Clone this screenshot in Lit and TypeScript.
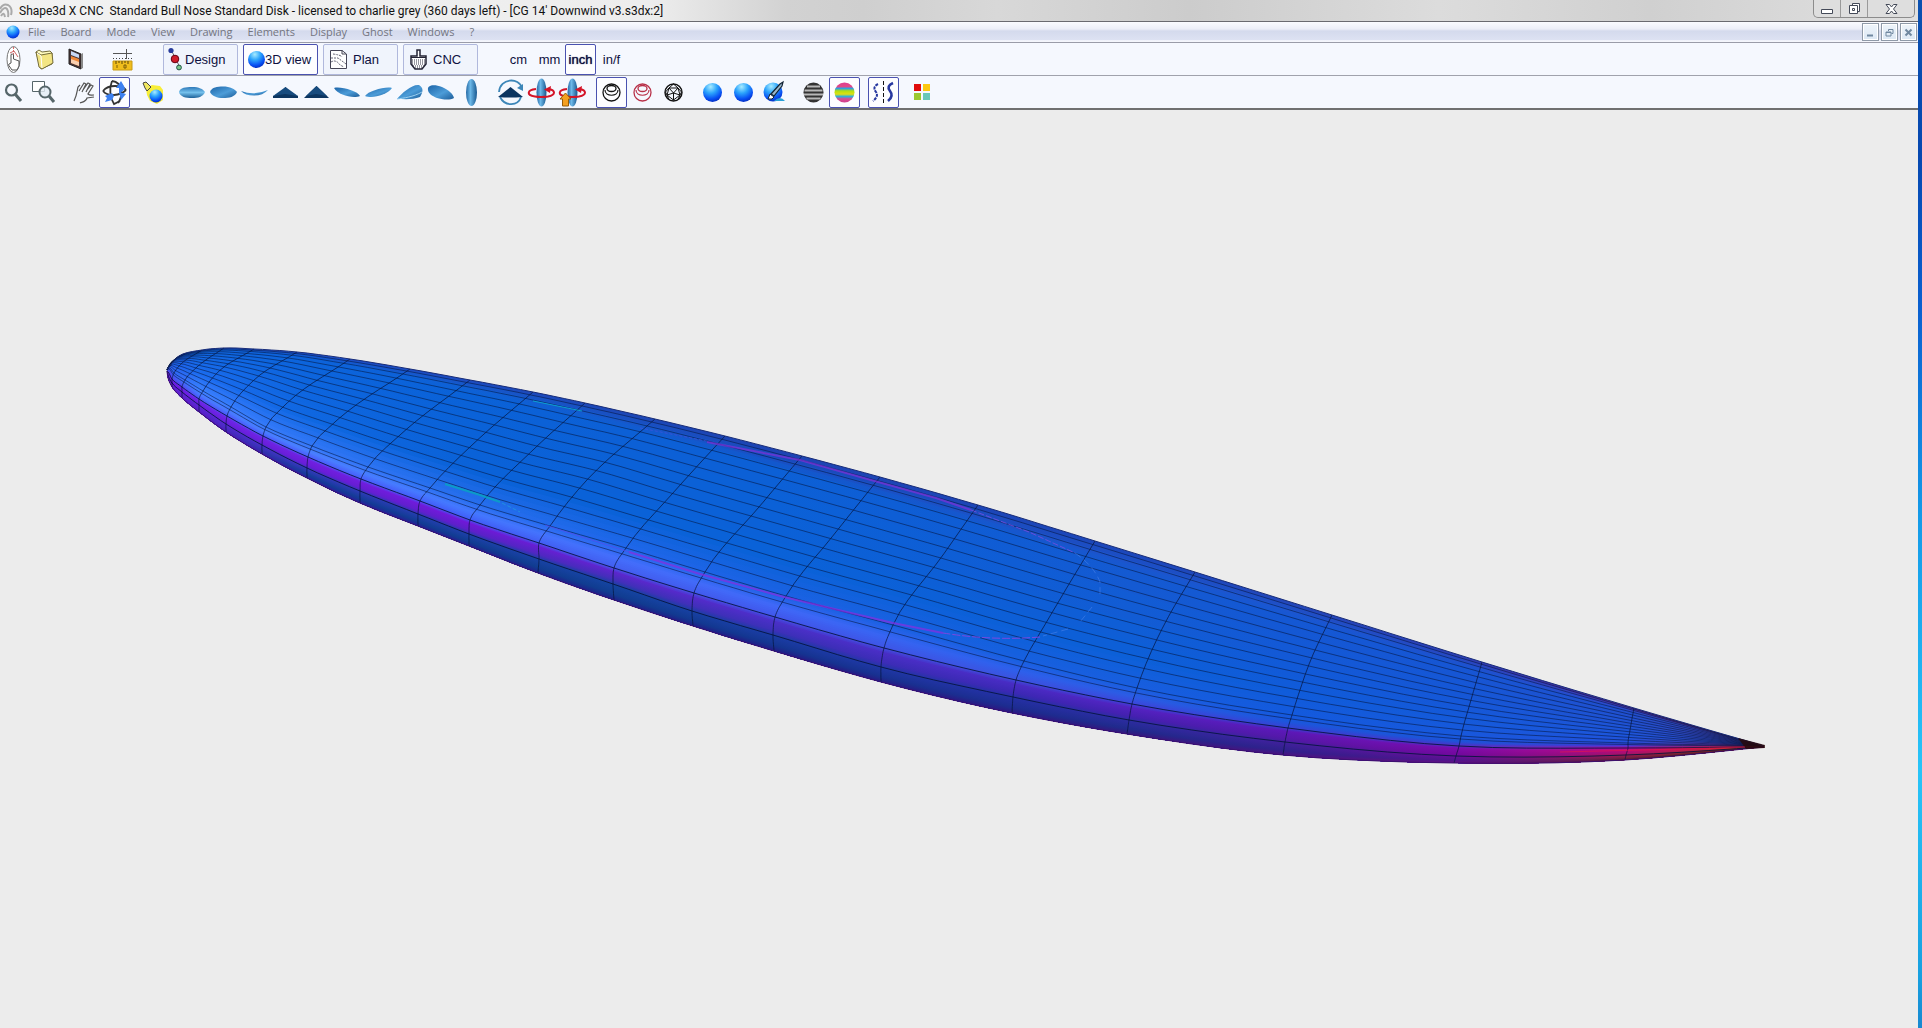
import { LitElement, html, svg, css, type SVGTemplateResult } from "lit";
import { customElement, state } from "lit/decorators.js";
import { classMap } from "lit/directives/class-map.js";

type Pt = [number, number];
type Station = [Pt, Pt, Pt, Pt, Pt, Pt];

/* Slices of the hull, nose to tail: far rail, deck, deck edge, rail, chine, near rail. */
const STATIONS: Station[] = [
  [[167, 369], [167, 369], [167, 370], [167, 371], [167, 371], [167, 371]],
  [[179, 356], [171, 363], [169, 368], [168, 372], [168, 375], [168, 378]],
  [[202, 350], [180, 365], [174, 373], [172, 379], [172, 383], [172, 387]],
  [[224, 348], [197, 367], [185, 380], [182, 387], [182, 392], [182, 398]],
  [[254, 349], [218, 372], [203, 391], [199, 399], [199, 405], [199, 412]],
  [[297, 352], [254, 380], [231, 407], [227, 416], [226, 424], [226, 432]],
  [[350, 359], [285, 405], [266, 427], [263, 436], [262, 445], [262, 454]],
  [[410, 369], [334, 423], [312, 446], [308, 457], [307, 468], [307, 478]],
  [[470, 380], [400, 435], [368, 467], [361, 479], [360, 491], [360, 503]],
  [[533, 392], [472, 445], [430, 488], [420, 501], [418, 514], [418, 526]],
  [[585, 403], [533, 450], [480, 505], [470, 520], [469, 534], [469, 546]],
  [[655, 419], [585, 482], [550, 526], [539, 543], [539, 559], [538, 573]],
  [[725, 436], [673, 493], [626, 548], [614, 568], [613, 584], [614, 600]],
  [[802, 456], [759, 507], [705, 572], [694, 593], [692, 611], [693, 626]],
  [[880, 477], [832, 537], [786, 596], [775, 617], [773, 635], [774, 651]],
  [[978, 505], [943, 555], [893, 625], [884, 648], [881, 667], [881, 682]],
  [[1095, 541], [1043, 628], [1024, 661], [1016, 680], [1013, 697], [1012, 713]],
  [[1195, 572], [1165, 623], [1137, 688], [1132, 704], [1129, 720], [1127, 734]],
  [[1332, 615], [1312, 657], [1292, 715], [1288, 728], [1285, 742], [1283, 755]],
  [[1482, 662], [1471, 700], [1461, 736], [1459, 746], [1456, 756], [1454, 763]],
  [[1634, 708], [1630, 730], [1628, 743], [1628, 748], [1626, 755], [1625, 760]],
  [[1764, 746], [1764, 746], [1764, 746], [1764, 747], [1764, 747], [1764, 747]],
];

const spline = (pts: Pt[], at: number): Pt => {
  const n = pts.length - 1;
  const i = Math.min(Math.floor(at), n - 1);
  const t = at - i;
  const a = pts[Math.max(i - 1, 0)];
  const b = pts[i];
  const c = pts[i + 1];
  const d = pts[Math.min(i + 2, n)];
  const axis = (k: 0 | 1) => {
    const sb = dist(a, b) || 1e-6;
    const sc = dist(b, c) || 1e-6;
    const sd = dist(c, d) || 1e-6;
    const m1 = i === 0 ? c[k] - b[k] : sc * ((b[k] - a[k]) / sb * (sc / (sb + sc)) + (c[k] - b[k]) / sc * (sb / (sb + sc)));
    const m2 = i === n - 1 ? c[k] - b[k] : sc * ((c[k] - b[k]) / sc * (sd / (sc + sd)) + (d[k] - c[k]) / sd * (sc / (sc + sd)));
    const t2 = t * t;
    const t3 = t2 * t;
    return (2 * t3 - 3 * t2 + 1) * b[k] + (t3 - 2 * t2 + t) * m1 + (3 * t2 - 2 * t3) * c[k] + (t3 - t2) * m2;
  };
  return [axis(0), axis(1)];
};
const dist = (p: Pt, q: Pt) => Math.hypot(p[0] - q[0], p[1] - q[1]);

/* Position on a slice: 0..1 runs over the deck by arc length, 1..4 over the rail. */
const onSlice = (s: Station, v: number): Pt => {
  if (v >= 1) return spline(s, v + 1);
  const steps = 24;
  const pts: Pt[] = [];
  for (let i = 0; i <= steps; i++) pts.push(spline(s, (2 * i) / steps));
  const len = [0];
  for (let i = 1; i <= steps; i++) len.push(len[i - 1] + dist(pts[i], pts[i - 1]));
  const goal = v * len[steps];
  if (len[steps] < 1e-6) return s[0];
  let i = 1;
  while (i < steps && len[i] < goal) i++;
  const f = (goal - len[i - 1]) / (len[i] - len[i - 1] || 1);
  return [pts[i - 1][0] + (pts[i][0] - pts[i - 1][0]) * f, pts[i - 1][1] + (pts[i][1] - pts[i - 1][1]) * f];
};

const lengthwise = (v: number): Pt[] => {
  const ctrl = STATIONS.map((s) => onSlice(s, v));
  const out: Pt[] = [];
  for (let i = 0; i <= (ctrl.length - 1) * 5; i++) out.push(spline(ctrl, i / 5));
  return out;
};
const across = (s: Station): Pt[] => Array.from({ length: 41 }, (_, i) => onSlice(s, i / 10));
const join = (pts: Pt[]) => pts.map((p) => `${p[0].toFixed(1)} ${p[1].toFixed(1)}`).join("L");

/* Curvature colours: one row for each place on the slice, one column for each x. */
const SHADE_X = [167, 199, 308, 470, 614, 775, 1014, 1130, 1286, 1457, 1627, 1764];
const SHADE: [number, string][] = [
  [0, "2a3cc0 1b50cc 1b4fc8 1c4cc0 1c48b8 1c44b4 1c46b8 1c48bc 2248bc 2c40b8 50289c 700830"],
  [0.06, "1c58dc 0f62dc 0c62da 1060d4 1658cc 1850c4 1c52c8 1c54cc 1c56d0 2050cc 3444c8 602070"],
  [0.12, "1c5ce0 1066e0 0c64dc 0a62d8 0c60d6 0c60d6 105cd4 145ad2 1458d4 1656d4 2050d0 4838a0"],
  [0.75, "2060ec 1c6cf0 0f68e2 0a62d8 0a62d8 0a62d8 0c60d8 0c60d8 0f5cda 145ada 1c56dc 3840b8"],
  [1, "3060f4 3c80ff 3478f8 2a70f0 2268ec 1c62e4 1860e0 1a5ee0 145ade 1858dc 2450dc 802080"],
  [1.5, "4050f0 4878ff 4a80ff 4478ff 446efc 4068f8 2e60ec 2c5ce4 1c56dc 1c54d8 4038d4 b01830"],
  [1.9, "5a38e8 4a58fa 4a60fc 4060f8 4260f0 4058ec 3a54e0 3a48dc 3444d4 4834c8 b00ca0 e01010"],
  [2.2, "6c1ce4 6c28e8 7020e0 7018d8 5c26cc 4a30c8 482cc4 5222c0 5c18b8 7a0cac c0087c e01818"],
  [2.7, "6e18e0 6a20e0 6a1cd8 5c20c8 4030b8 3c30b8 3c28b4 4420b0 5418a8 7408a0 a81070 c03818"],
  [3, "6420d8 6024d8 3438bc 1c40a8 1444a0 1a3ca4 2430a4 2c2ca0 40209c 680c98 a01850 903018"],
  [3.6, "6020d0 5824cc 143c98 103c90 103c90 143490 1c2c90 202a8c 30208c 50148c 702040 602010"],
  [4, "6414c0 5c14c0 3018a0 241c90 201c88 241884 301480 38147c 501080 680c80 501030 301008"],
];
const rgb = (h: string) => [0, 2, 4].map((i) => parseInt(h.slice(i, i + 2), 16));
const shadeAt = (v: number): string[] => {
  let i = 0;
  while (i < SHADE.length - 2 && SHADE[i + 1][0] < v) i++;
  const f = Math.min(1, Math.max(0, (v - SHADE[i][0]) / (SHADE[i + 1][0] - SHADE[i][0])));
  const lo = SHADE[i][1].split(" ");
  const hi = SHADE[i + 1][1].split(" ");
  return lo.map((c, k) => {
    const a = rgb(c);
    const b = rgb(hi[k]);
    return `rgb(${a.map((x, n) => Math.round(x + (b[n] - x) * f)).join(",")})`;
  });
};

const STRIPS = [
  0, 0.03, 0.06, 0.09, 0.12, 0.3, 0.5, 0.65, 0.75, 0.8, 0.84, 0.88, 0.91, 0.94, 0.97,
  ...Array.from({ length: 38 }, (_, i) => 1 + i * 0.08),
];
const GRID_LINES = [0.03, 0.07, 0.13, 0.2, 0.28, 0.36, 0.44, 0.52, 0.6, 0.68, 0.76, 0.84, 0.92, 1, 1.3];

const board = () => {
  const near = lengthwise(4);
  const back = join([...near].reverse());
  const far = lengthwise(0);
  const strips = STRIPS.map((v, i) => ({ id: `strip${i}`, colours: shadeAt(v), d: `M${join(lengthwise(v))}L${back}Z` }));
  const span = SHADE_X[SHADE_X.length - 1] - SHADE_X[0];
  return svg`
    <defs>
      ${strips.map(
        (s) => svg`<linearGradient id=${s.id} gradientUnits="userSpaceOnUse" x1="167" x2="1764" y1="0" y2="0">
          ${s.colours.map((c, k) => svg`<stop offset=${(SHADE_X[k] - SHADE_X[0]) / span} stop-color=${c} />`)}
        </linearGradient>`,
      )}
    </defs>
    ${strips.map((s) => svg`<path d=${s.d} fill="url(#${s.id})" />`)}
    <g fill="none" stroke="#04143c" stroke-width="1">
      ${GRID_LINES.map((v) => svg`<path d="M${join(lengthwise(v))}" stroke-opacity=".55" />`)}
      <path d="M${join(lengthwise(2))}" stroke-opacity=".85" />
      <path d="M${join(lengthwise(3))}" stroke-opacity=".85" />
      ${STATIONS.slice(2, -1).map((s) => svg`<path d="M${join(across(s))}" stroke-opacity=".7" />`)}
      <path d="M${join(far)}" stroke="#182c78" />
      <path d="M${join(near)}" stroke="#3c1070" />
    </g>
    <path d="M1738 738L1765 745V748L1746 749Z" fill="#2a0808" fill-opacity=".8" />
    <path d="M1560 752Q1650 750 1745 747" fill="none" stroke="#e81848" stroke-opacity=".6" />
    <g fill="none" stroke-width="1">
      <path d="M640 428L707 441" stroke="#4a50e0" stroke-opacity=".6" stroke-dasharray="3 2" />
      <path d="M707 442L800 460L871 480L936 498L971 510" stroke="#8030d8" stroke-width="2" stroke-opacity=".7" />
      <path d="M971 510L1029 532L1075 553" stroke="#7a4ce0" stroke-opacity=".8" stroke-dasharray="6 2" />
      <path d="M1075 553Q1094 566 1100 582V595M1092 607L1080 622M1068 629L1043 636" stroke="#4a80e8" stroke-opacity=".6" stroke-dasharray="7 4" />
      <path d="M1040 637Q993 641 943 633" stroke="#7a48e0" stroke-dasharray="8 2" />
      <path d="M943 633L893 623L784 597L700 574L629 552" stroke="#8a2ce0" stroke-width="2" stroke-opacity=".7" />
      <path d="M629 552L545 525" stroke="#5a48ec" stroke-opacity=".7" />
      <path d="M533 401L582 411" stroke="#0ca0d0" />
      <path d="M445 484L480 495L500 502" stroke="#08a8c0" stroke-width="2" stroke-opacity=".8" />
      <path d="M502 503L520 512" stroke="#2090e0" stroke-dasharray="4 2" />
    </g>
  `;
};

type Art = SVGTemplateResult;
const ball = (x: number, y: number, r: number): Art => svg`<circle cx=${x} cy=${y} r=${r} fill="url(#ball)" />`;
const wireBall = (c: string): Art => svg`<g fill="none" stroke=${c}><circle cx="14.5" cy="14.5" r="8.5" stroke-width="1.3" />
  <ellipse cx="14.5" cy="10.5" rx="4.5" ry="3" stroke-width="1.3" /><path d="M8 12C8 19 21 19 21 12" stroke-width="1.2" /></g>`;
const spin = svg`<ellipse cx="14.5" cy="14.5" rx="5" ry="14" fill="url(#hull)" />
  <path d="M9 11C0 12 -1 17 8 18.5Q14 19.5 21 18.5C29 17 29 12 21 11" fill="none" stroke="#d41428" stroke-width="2" /><path d="M24 8L17 11.5L23 15Z" fill="#d41428" />`;

const ART: Record<string, Art> = {
  newBoard: svg`<ellipse cx="14.5" cy="14.5" rx="6.5" ry="13" fill="#fff" stroke="#777" /><path d="M14.5 2V14" stroke="#d66" stroke-dasharray="2 1" />
    <path d="M10 19L12 18V9.500Q13.500 8 14.500 10V14L20 16V21L18 25H13L9.500 20Z" fill="#fff" stroke="#555" /><path d="M11 8L15 6L19 12" fill="none" stroke="#c66" />`,
  open: svg`<path d="M6 7L9 5L12 7L20 6L22 8V19L11 24Z" fill="#fffbc0" stroke="#746c3a" /><path d="M6 7L11 10L22 8L23 18L12 24L9 22Z" fill="#f3e583" stroke="#746c3a" />
    <path d="M7 8L11 11L12 23" fill="none" stroke="#fff" />`,
  save: svg`<path d="M8 4L20 9V24L8 19Z" fill="#4a3434" stroke="#222" /><path d="M20 9L22 8V23L20 24" fill="#888" /><path d="M10 6L18 9.500V13L10 10Z" fill="#c8d8f4" />
    <path d="M10 11L18 14V21L10 18Z" fill="#f08838" /><path d="M10 14L18 17V21L10 18Z" fill="#fff" fill-opacity=".6" />`,
  ruler: svg`<path d="M5 16H24V25H5Z" fill="#f0bd1c" stroke="#c89a14" /><path d="M8 16V19M11 16V18M14 16V19M17 16V18M20 16V19" stroke="#5a4408" />
    <path d="M9 20V23M16 20H18V23H16Z" stroke="#7a5c08" fill="none" /><path d="M5 8.500H24M18.500 4V14" stroke="#555" /><path d="M5 13.500H24" stroke="#444" stroke-dasharray="1 2" />`,
  design: svg`<path d="M9 5L14 14L18 23" fill="none" stroke="#666" /><circle cx="9" cy="5.500" r="2.600" fill="#283c9c" /><circle cx="13" cy="14" r="3.800" fill="#d01c28" stroke="#601" />
    <circle cx="17" cy="22.500" r="2.400" fill="#7cc88c" stroke="#254" />`,
  view3d: ball(14.5, 14.5, 8.5),
  plan: svg`<path d="M6.500 5.500H18L22.500 9V23.500H6.500Z" fill="#fff" stroke="#445" /><path d="M18 5V9H22" fill="none" stroke="#445" /><path d="M9 9Q17 10 18 12M7 13H14L22 19M7 17Q12 14 16 20L20 22" fill="none" stroke="#667" stroke-dasharray="2 1" />`,
  cnc: svg`<path d="M13 5H16V11H22V19L18 24H11L7 19V11H13Z" fill="#fff" stroke="#223" stroke-width="1.500" /><path d="M7 12.500H22" stroke="#223" /><path d="M8 15H22M8 17H22M8 19H22M9 21H21M11 23H19" stroke="#334" stroke-dasharray="1 1" />`,
  zoom: svg`<circle cx="12.500" cy="12" r="5.500" fill="none" stroke="#56666a" stroke-width="2.200" /><path d="M16.500 16.500L22 23" stroke="#56666a" stroke-width="3" />`,
  zoomBox: svg`<path d="M2.500 3.500H14.500V13.500H2.500Z" fill="#fff" stroke="#56666a" /><circle cx="15" cy="14" r="5.500" fill="#e4ecf4" fill-opacity=".8" stroke="#56666a" stroke-width="2" /><path d="M19 18L24 24" stroke="#56666a" stroke-width="3" />`,
  hand: svg`<path d="M5 23C8 17 8 13 9 9L11 7M10 13L15 5L17 6L13 14M14 12L19 5L21 6L17 14M18 12L22 7L24 8L19 16C21 18 22 17 25 17M25 19L18 20C17 24 13 24 11 25" fill="none" stroke="#555" stroke-width="1.200" />`,
  orbit: svg`<g fill="none" stroke="#333" stroke-width="1.800"><path d="M12 3C9 10 10 20 14 26L20 23" /><path d="M3 13C8 19 20 18 26 12" /><path d="M12 3Q20 4 21 12T18 25" /><path d="M3 13Q7 8 15 8T26 12" /></g>
    <path d="M21 3L16 10H19V16L25 11L24 8Z" fill="#3c80f0" /><path d="M12 15L5 18L7 20L5 24L12 22L14 18Z" fill="#3c80f0" /><path d="M19 14L26 16L21 22Z" fill="#3c80f0" />`,
  light: svg`<path d="M7 10L13 7L21 8L24 12V22L18 26L11 23L8 17Z" fill="#f8ee38" /><path d="M4 5L7 4L12 9L8 13L6 10Z" fill="#f0e860" stroke="#444" />${ball(17, 18, 6.500)}`,
  top: svg`<path d="M1 14C2 9.500 8 9 14 9C21 9 25 11 27 14C25 19 20 20 14 20C8 20 2 19 1 14Z" fill="url(#hullv)" />`,
  bottom: svg`<path d="M1 14C3 9 8 8.500 14 8.500C21 8.500 26 11 28 14C26 19 20 20 14 20C8 20 3 18 1 14Z" fill="url(#hulld)" />`,
  side: svg`<path d="M1 13Q14 18 28 12Q23 17.500 14 17.500Q5 17.500 1 13Z" fill="url(#hulld)" />`,
  nose: svg`<path d="M2 20L2 18L9 15L14.500 9L20 15L27 18V20Z" fill="#0c3560" /><path d="M2 18L14.500 9L27 18L14 16Z" fill="#174b7e" />`,
  tail: svg`<path d="M2 20L4 18L14.500 8L25 18L27 20Z" fill="#0c3560" /><path d="M4 18L14.500 8L25 18L14 16Z" fill="#174b7e" />`,
  iso1: svg`<path d="M1 10C7 8 25 13 27 18C20 21 5 17 1 10Z" fill="url(#hulld)" />`,
  iso2: svg`<path d="M28 10C22 8 4 13 1 18C8 21 23 17 28 10Z" fill="url(#hulld)" />`,
  iso3: svg`<path d="M2 21C7 15 17 6 24 7C29 10 28 14 25 19C18 22 9 21 2 21Z" fill="url(#hulld)" /><path d="M2 21C9 20 18 19 27 14" fill="none" stroke="#9cd0f0" />`,
  iso4: svg`<path d="M2 12C1 7 8 6 16 9C23 12 27 16 28 20C23 23 15 21 11 20C6 18 2 15 2 12Z" fill="url(#hulld)" />`,
  upright: svg`<ellipse cx="14.500" cy="14.500" rx="5.500" ry="13.500" fill="url(#hull)" />`,
  flip: svg`<path d="M3 14C4 0 23 -1 26 10M4 19C9 29 22 28 25 19" fill="none" stroke="#3c86b8" stroke-width="1.800" /><path d="M27 6L27 13L21 10Z" fill="#3c86b8" /><path d="M2 19L14.500 9L27 19L20 19.500H8Z" fill="#0c3560" />`,
  spin,
  spinUp: svg`${spin}<path d="M7.500 15L13 21H10.500V28H4.500V21H2Z" fill="#f4a020" stroke="#985c08" />`,
  wire: wireBall("#111"),
  wireRed: wireBall("#b83048"),
  mesh: svg`<g fill="none" stroke="#111"><circle cx="14.500" cy="14.500" r="8.500" stroke-width="1.400" /><path d="M10 10H19L21 17L14.500 22L8 17ZM10 10L6.500 14L8 17L10 21.500M19 10L22.500 14L21 17L19 21.500M10 10L14.500 6L19 10M10 10L14.500 15L19 10M8 17L14.500 15L21 17M14.500 15V22" /></g>`,
  solid: ball(14.5, 14.5, 9.5),
  smooth: ball(14.5, 14.5, 9.5),
  paint: svg`${ball(13, 14, 9.500)}<path d="M11 16L20 6L23 4L22 8L14 18Z" fill="#9cb8c8" stroke="#123" stroke-width="1.200" /><path d="M10 16L14 19Q13 22 8 21Z" fill="#fff" stroke="#123" /><path d="M14 23Q20 17 25 23Z" fill="#28a0d8" />`,
  zebra: svg`<circle cx="14.500" cy="14.500" r="10" fill="#333" /><path d="M8 8.500H21M5.500 12.500H23.500M5 16.500H24M7.500 20.500H21.500" stroke="#b8b8b8" stroke-width="1.800" />`,
  curvature: svg`<circle cx="14.500" cy="14.500" r="10" fill="url(#rainbow)" />`,
  mirror: svg`<g fill="none" stroke="#2838a0"><path d="M9 6Q3 9 7 14Q10 18 4 23" stroke-dasharray="3 1" stroke-width="2" /><path d="M24 5Q17 8 21 13Q25 18 19 23" stroke-width="2.600" /></g><path d="M14.500 3V26" stroke="#111" stroke-dasharray="4 2" />`,
  palette: svg`<path d="M6 6H13V13H6Z" fill="#e00c0c" /><path d="M15 6H22V13H15Z" fill="#fcc810" /><path d="M6 15H13V22H6Z" fill="#9cc830" /><path d="M15 15H22V22H15Z" fill="#68c8b8" />`,
};

const MENUS = ["File", "Board", "Mode", "View", "Drawing", "Elements", "Display", "Ghost", "Windows", "?"];
const FILE_TOOLS: [string, string][][] = [
  [["newBoard", "New board"], ["open", "Open"], ["save", "Save"]],
  [["ruler", "Measures"]],
];
const MODES: [string, string][] = [["design", "Design"], ["view3d", "3D view"], ["plan", "Plan"], ["cnc", "CNC"]];
const UNITS = ["cm", "mm", "inch", "in/f"];
const VIEW_TOOLS: [string, string][][] = [
  [["zoom", "Zoom"], ["zoomBox", "Zoom window"]],
  [["hand", "Pan"], ["orbit", "Orbit"]],
  [["light", "Light"]],
  [["top", "Deck"], ["bottom", "Bottom"], ["side", "Side"], ["nose", "Nose"], ["tail", "Tail"], ["iso1", "Left view"], ["iso2", "Right view"], ["iso3", "Nose perspective"], ["iso4", "Tail perspective"], ["upright", "Upright"]],
  [["flip", "Flip"], ["spin", "Spin"], ["spinUp", "Spin upright"]],
  [["wire", "Wireframe"], ["wireRed", "Slices"], ["mesh", "Mesh"]],
  [["solid", "Solid"], ["smooth", "Smooth"], ["paint", "Paint"]],
  [["zebra", "Zebra"], ["curvature", "Curvature"]],
  [["mirror", "Symmetry"]],
  [["palette", "Colours"]],
];

@customElement("app-root")
export class AppRoot extends LitElement {
  @state() private mode = "view3d";
  @state() private unit = "inch";
  @state() private pressed = new Set(["orbit", "wire", "curvature", "mirror"]);

  static styles = css`
    :host { display: flex; height: 100vh; overflow: hidden; background: #ececec; font-family: "Liberation Sans", Arial, sans-serif; font-size: 13px; color: #0e1040; }
    * { box-sizing: border-box; }
    button { font: inherit; color: inherit; background: none; border: 0; padding: 0; margin: 0; }
    svg { display: block; }
    .window { flex: 1; min-width: 0; display: flex; flex-direction: column; }
    .desktop { width: 4px; background: linear-gradient(#0a50b0, #0648b0 15%, #0a60d0 30%, #149ae8 50%, #28c4f8 75%, #18a0e0 95%, #1888d0); }
    .title { height: 22px; display: flex; align-items: flex-start; border-bottom: 1px solid #6a6a70;
      background: linear-gradient(90deg, #f2f2f2, #ededed 34%, #d2d2d2 41%, #cfcfcf 45%, #d8d8d8 52%, #cccccc 62%, #dcdcdc 75%, #d0d0d0 86%, #e0e0e0); }
    .title .logo { width: 16px; height: 20px; flex: none; }
    .title h1 { flex: 1; margin: 0 0 0 3px; font: 400 12px/22px Roboto, "Open Sans", sans-serif; color: #111; white-space: pre; }
    .caption { display: flex; height: 18px; margin-right: 3px; border: 1px solid #8c8c8c; border-top: 0; border-radius: 0 0 5px 5px; background: #dedede; }
    .caption button { width: 27px; display: grid; place-items: center; border-right: 1px solid #9a9a9a; }
    .caption button:last-child { width: 46px; border: 0; }
    .menu { height: 21px; display: flex; align-items: center; border-bottom: 1px solid #9a9ca8; background: linear-gradient(#fafbff, #eceef8 35%, #d4daed 45%, #dde2f2 90%, #f4f6fc 93%); }
    .menu .dot { margin: 0 8px 0 6px; width: 14px; height: 14px; }
    .menu nav { flex: 1; display: flex; gap: 15px; font: 11px/20px "Open Sans", "Noto Sans", sans-serif; color: #73757f; }
    .mdi { display: flex; gap: 2px; margin-right: 1px; }
    .mdi button { width: 17px; height: 18px; display: grid; place-items: center; border: 1px solid #8f9aa8; background: linear-gradient(#eef4fa, #dce8f4); box-shadow: inset 0 0 0 1px #fff; }
    .bar { height: 33px; display: flex; align-items: center; gap: 8px; border-bottom: 1px solid #a0a2ac; background: #f5f8fe; }
    .bar.views { height: 34px; border-bottom: 2px solid #707070; }
    .group { display: flex; }
    .group:first-child { margin-left: -2px; }
    .group.gauge { margin-left: 8px; }
    .tool, .unit { width: 31px; height: 31px; display: grid; place-items: center; border: 1px solid transparent; border-radius: 2px; white-space: nowrap; }
    .on { border-color: #4a52b0; background: #fdfdff; }
    .modes { display: flex; gap: 5px; margin-left: 17px; }
    .mode { width: 75px; height: 31px; display: flex; align-items: center; border: 1px solid #b0b8dc; border-radius: 2px; background: #f0f4fc; white-space: nowrap; }
    .mode.on { border-color: #4a52b0; background: #fdfdff; }
    .mode svg { flex: none; margin: 0 -6px 0 -2px; }
    .mode.wide svg { margin: 0; }
    .units { display: flex; margin-left: 17px; }
    .unit.on { text-shadow: 0 0 1px #0e1040; }
    .view { flex: 1; min-height: 0; width: 100%; background: #ececec; }
  `;

  private toggle(id: string) {
    const next = new Set(this.pressed);
    if (!next.delete(id)) next.add(id);
    this.pressed = next;
  }

  private icon(id: string) {
    return html`<svg width="29" height="29" viewBox="0 0 29 29" aria-hidden="true">${ART[id]}</svg>`;
  }

  private tools(groups: [string, string][][]) {
    return groups.map(
      (g) => html`<div class=${classMap({ group: true, gauge: g[0][0] === "ruler" })}>
        ${g.map(([id, label]) => html`<button class=${classMap({ tool: true, on: this.pressed.has(id) })} aria-label=${label} @click=${() => this.toggle(id)}>${this.icon(id)}</button>`)}
      </div>`,
    );
  }

  render() {
    return html`
      <div class="window">
        <header class="title">
          <svg class="logo" viewBox="0 0 16 20" aria-hidden="true">
            <path d="M0 9Q3 3 8 5Q13 8 11 15M0 13Q4 6 7 9Q9 12 8 17M1 16Q4 11 5 17" fill="none" stroke="#aaa" stroke-width="2" />
          </svg>
          <h1>Shape3d X CNC  Standard Bull Nose Standard Disk - licensed to charlie grey (360 days left) - [CG 14' Downwind v3.s3dx:2]</h1>
          <div class="caption">
            <button aria-label="Minimize"><svg width="12" height="12" viewBox="0 0 12 12"><path d="M.5 6.500H11.500V10.500H.5Z" fill="#fff" stroke="#444a58" /></svg></button>
            <button aria-label="Restore"><svg width="13" height="13" viewBox="0 0 13 13"><path d="M4.500 3.500V1.500H11.500V9.500H9.500" fill="#fff" stroke="#444a58" /><path d="M1.500 3.500H9.500V11.500H1.500ZM4.500 6.500H6.500V8.500H4.500Z" fill="#fff" stroke="#444a58" /></svg></button>
            <button aria-label="Close"><svg width="13" height="12" viewBox="0 0 13 12"><path d="M1 1.500H4.500L6.500 4L8.500 1.500H12L8.500 6L12 10.500H8.500L6.500 8L4.500 10.500H1L4.500 6Z" fill="#fff" stroke="#444a58" /></svg></button>
          </div>
        </header>
        <div class="menu">
          <svg class="dot" viewBox="0 0 14 14" aria-hidden="true">${ball(7, 7, 6.5)}</svg>
          <nav>${MENUS.map((m) => html`<button>${m}</button>`)}</nav>
          <div class="mdi">
            <button aria-label="Minimize document"><svg width="9" height="9" viewBox="0 0 9 9"><path d="M1 7.500H7" stroke="#7088a0" stroke-width="2" /></svg></button>
            <button aria-label="Restore document"><svg width="9" height="9" viewBox="0 0 9 9"><path d="M3.500 3V1.500H8V5.500H6.500M1 4H6V8H1ZM1 4.500H6" fill="none" stroke="#7088a0" /></svg></button>
            <button aria-label="Close document"><svg width="9" height="9" viewBox="0 0 9 9"><path d="M1.500 1.500L7.500 7.500M7.500 1.500L1.500 7.500" stroke="#7088a0" stroke-width="2" /></svg></button>
          </div>
        </div>
        <div class="bar files">
          ${this.tools(FILE_TOOLS)}
          <div class="modes">
            ${MODES.map(
              ([id, label]) => html`<button class=${classMap({ mode: true, wide: id === "plan" || id === "cnc", on: this.mode === id })} @click=${() => (this.mode = id)}>
                ${this.icon(id)}<span>${label}</span>
              </button>`,
            )}
          </div>
          <div class="units">
            ${UNITS.map((u) => html`<button class=${classMap({ unit: true, on: this.unit === u })} @click=${() => (this.unit = u)}>${u}</button>`)}
          </div>
        </div>
        <div class="bar views">${this.tools(VIEW_TOOLS)}</div>
        <svg class="view" viewBox="0 110 1918 918" role="img" aria-label="Board in 3D">
          <defs>
            <radialGradient id="ball" cx=".4" cy=".2" r=".85"><stop offset="0" stop-color="#a8ecff" /><stop offset=".4" stop-color="#2ca4fc" /><stop offset=".75" stop-color="#0850f4" /><stop offset="1" stop-color="#0428b8" /></radialGradient>
            <linearGradient id="hull"><stop offset="0" stop-color="#2468a4" /><stop offset=".4" stop-color="#6cb8e8" /><stop offset="1" stop-color="#185890" /></linearGradient>
            <linearGradient id="hullv" x2="0" y2="1"><stop offset="0" stop-color="#2c78b8" /><stop offset=".5" stop-color="#74c0ec" /><stop offset="1" stop-color="#1c6098" /></linearGradient>
            <linearGradient id="hulld" y2="1"><stop offset="0" stop-color="#1c64a8" /><stop offset=".55" stop-color="#4c9cd8" /><stop offset="1" stop-color="#1c5c98" /></linearGradient>
            <linearGradient id="rainbow" x2="0" y2="1"><stop offset="0" stop-color="#e03c90" /><stop offset=".2" stop-color="#e04888" /><stop offset=".3" stop-color="#30a0e0" /><stop offset=".42" stop-color="#b0e010" /><stop offset=".58" stop-color="#e0e010" /><stop offset=".7" stop-color="#30b0d8" /><stop offset=".82" stop-color="#d84c90" /><stop offset="1" stop-color="#d04090" /></linearGradient>
          </defs>
          ${board()}
        </svg>
      </div>
      <div class="desktop"></div>
    `;
  }
}
